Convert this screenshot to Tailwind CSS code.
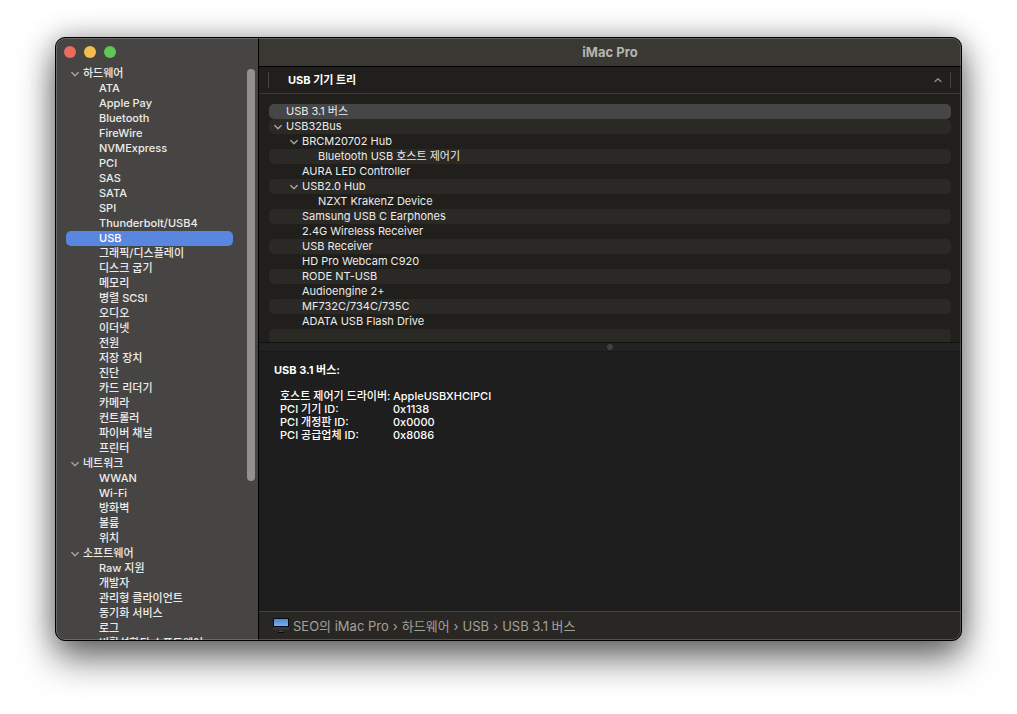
<!DOCTYPE html>
<html lang="ko">
<head>
<meta charset="utf-8">
<meta name="viewport" content="width=device-width, initial-scale=1">
<title>iMac Pro</title>
<script src="https://cdn.jsdelivr.net/npm/@tailwindcss/browser@4"></script>
</head>
<body class="h-screen bg-white px-[55px] pt-[37px] pb-[73px] font-['Inter','Noto_Sans_CJK_KR',sans-serif] text-[11px] leading-[15px] text-[#ececeb]">
<main class="relative flex h-full overflow-hidden rounded-[10px] border border-black bg-[#1e1e1e] shadow-[0_18px_36px_rgba(0,0,0,0.55),0_0_28px_rgba(0,0,0,0.28)]">

  <aside class="relative flex w-[203px] shrink-0 flex-col border-r border-black bg-[#474543]">
    <div class="flex h-7 shrink-0 items-center gap-2 pl-2">
      <button aria-label="닫기" class="size-3 rounded-full bg-[#ec6b5f]"></button>
      <button aria-label="최소화" class="size-3 rounded-full bg-[#f4be4f]"></button>
      <button aria-label="확대" class="size-3 rounded-full bg-[#62c554]"></button>
    </div>
    <nav aria-label="항목" class="min-h-0 flex-1 overflow-hidden pr-[25px] pl-[10px] font-medium">
      <ul id="sidebar"></ul>
    </nav>
    <div class="absolute top-[31px] right-[3px] h-[412px] w-2 rounded-full bg-[#929190]"></div>
  </aside>

  <div class="flex min-w-0 flex-1 flex-col">
    <header class="flex h-[29px] shrink-0 items-center justify-center border-b border-black bg-[#393832]">
      <h1 class="text-[13px] font-bold text-[#b5b4b1]">iMac Pro</h1>
    </header>

    <section class="flex h-[276px] shrink-0 flex-col overflow-hidden border-b border-[#111111] bg-[#201f1b]">
      <div class="flex h-[27px] shrink-0 items-center border-b border-[#3c3b39] bg-[#201f1d] pr-[10px] pl-[9px]">
        <button class="flex h-4 flex-1 items-center justify-between border-x border-[#454442] pr-2 pl-[19px] font-bold text-white">
          <span>USB 기기 트리</span>
          <svg class="h-[6px] w-2" viewBox="0 0 8 6" fill="none" stroke="#8d8c8a" stroke-width="1.4" stroke-linecap="round" stroke-linejoin="round"><path d="M1 4.5 4 1.8 7 4.5"/></svg>
        </button>
      </div>
      <ul id="tree" role="tree" aria-label="USB 기기 트리" class="px-[10px] pt-[10px]"></ul>
    </section>

    <div class="flex h-[9px] shrink-0 items-center justify-center border-b border-[#191919] bg-[#222222]">
      <span class="size-[6px] rounded-full bg-[#414141]"></span>
    </div>

    <section class="min-h-0 flex-1 px-[15px] pt-[10px] leading-[13px] font-medium text-white">
      <h2 class="leading-4 font-bold">USB 3.1 버스:</h2>
      <dl class="mt-3 grid grid-cols-[113px_1fr] pl-[6px]">
        <dt>호스트 제어기 드라이버:</dt><dd>AppleUSBXHCIPCI</dd>
        <dt>PCI 기기 ID:</dt><dd>0x1138</dd>
        <dt>PCI 개정판 ID:</dt><dd>0x0000</dd>
        <dt>PCI 공급업체 ID:</dt><dd>0x8086</dd>
      </dl>
    </section>

    <footer class="flex h-[29px] shrink-0 items-center border-t border-[#42423e] bg-[#292723] pl-[14px] text-[13px] text-[#a3a19e]">
      <svg class="mr-1 h-4 w-4" viewBox="0 0 16 16"><path fill="#080c12" d="M0 0h16v9H0z"/><path fill="url(#screen)" d="M1 1h14v7H1z"/><path fill="#363636" d="M0 9h16v3H0z"/><path fill="#4a4a49" d="M6 13h4v1H6z"/><path fill="#080808" d="M5 14h6v1H5z"/><defs><linearGradient id="screen" x2="0" y2="1"><stop stop-color="#4b8ad2"/><stop offset="1" stop-color="#77aff0"/></linearGradient></defs></svg>
      <nav aria-label="경로"><ol class="flex items-center gap-1">
        <li><a href="#">SEO의 iMac Pro</a></li>
        <li aria-hidden="true">›</li>
        <li><a href="#">하드웨어</a></li>
        <li aria-hidden="true">›</li>
        <li><a href="#">USB</a></li>
        <li aria-hidden="true">›</li>
        <li><a href="#">USB 3.1 버스</a></li>
      </ol></nav>
    </footer>
  </div>

  <div class="pointer-events-none absolute inset-0 rounded-[9px] border border-white/20"></div>
</main>

<script>
const chevron = '<svg class="h-[6px] w-2" viewBox="0 0 8 6" fill="none" stroke="#a3a2a0" stroke-width="1.4" stroke-linecap="round" stroke-linejoin="round"><path d="M.8 1.4 4 4.8 7.2 1.4"/></svg>';
const groups = [
  ['하드웨어', ['ATA','Apple Pay','Bluetooth','FireWire','NVMExpress','PCI','SAS','SATA','SPI','Thunderbolt/USB4','USB','그래픽/디스플레이','디스크 굽기','메모리','병렬 SCSI','오디오','이더넷','전원','저장 장치','진단','카드 리더기','카메라','컨트롤러','파이버 채널','프린터']],
  ['네트워크', ['WWAN','Wi-Fi','방화벽','볼륨','위치']],
  ['소프트웨어', ['Raw 지원','개발자','관리형 클라이언트','동기화 서비스','로그','비활성화된 소프트웨어']]
];
document.getElementById('sidebar').innerHTML = groups.map(([name, items]) =>
  `<li><button class="flex h-[15px] items-center gap-1 pl-[5px]">${chevron}${name}</button><ul>` +
  items.map(t => `<li><a href="#" class="${t === 'USB' ? 'block h-[15px] rounded-[5px] bg-[#5987df] pl-[33px] text-white' : 'block h-[15px] pl-[33px]'}">${t}</a></li>`).join('') +
  '</ul></li>').join('');

const indent = ['pl-[5px]', 'pl-[21px]', 'pl-[37px]'];
const devices = [
  [0,'USB 3.1 버스'],[0,'USB32Bus',1],[1,'BRCM20702 Hub',1],[2,'Bluetooth USB 호스트 제어기'],
  [1,'AURA LED Controller'],[1,'USB2.0 Hub',1],[2,'NZXT KrakenZ Device'],[1,'Samsung USB C Earphones'],
  [1,'2.4G Wireless Receiver'],[1,'USB Receiver'],[1,'HD Pro Webcam C920'],[1,'RODE NT-USB'],
  [1,'Audioengine 2+'],[1,'MF732C/734C/735C'],[1,'ADATA USB Flash Drive'],[0,'']
];
document.getElementById('tree').innerHTML = devices.map(([level, name, open], i) => {
  const fill = i === 0 ? 'bg-[#464646]' : i % 2 ? 'bg-[#2a2926]' : '';
  const toggle = open ? `<button aria-label="${name} 접기" class="w-2">${chevron}</button>` : '<span class="w-2"></span>';
  return `<li role="${name ? 'treeitem' : 'none'}" class="flex h-[15px] items-center gap-1 rounded-[5px] ${indent[level]} ${fill}">${toggle}<span>${name}</span></li>`;
}).join('');
</script>
</body>
</html>
